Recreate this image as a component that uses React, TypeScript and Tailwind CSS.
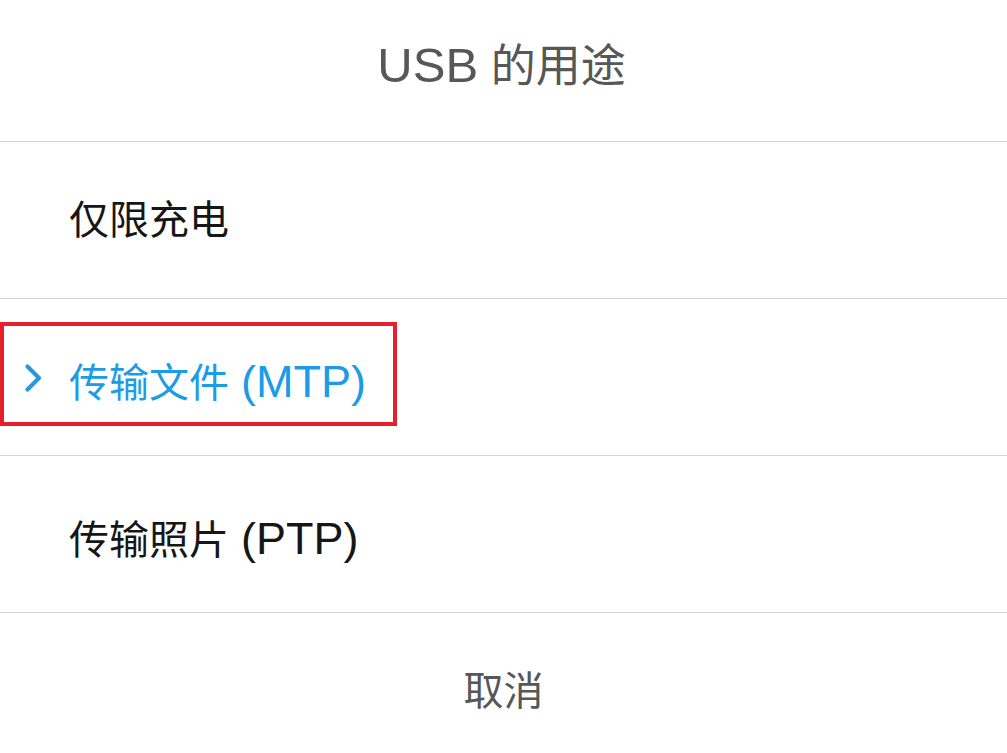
import React from "react";

const font = { fontFamily: '"Liberation Sans", "Noto Sans CJK SC", sans-serif' };

export default function App() {
  return (
    <div className="w-[1007px] h-[753px] overflow-hidden bg-white" style={font}>
      <div className="h-[141px] flex items-center justify-center pb-[10px] pr-[4px]">
        <span className="text-[45px] text-[#575757] leading-none">
          <span className="text-[49px]">USB</span> 的用途
        </span>
      </div>
      <div className="h-[157px] border-t border-[#d4d4d4] flex items-center pl-[69px]">
        <span className="text-[40px] text-[#161616] leading-none">仅限充电</span>
      </div>
      <div className="relative h-[157px] border-t border-[#d4d4d4] flex items-center pl-[69px] pt-[8px]">
        <svg className="absolute left-[23px] top-[64px]" width="20" height="30" viewBox="0 0 20 30">
          <path d="M4.5 3.5 L16 15 L4.5 26.5" fill="none" stroke="#2a97dc" strokeWidth="4.2" strokeLinecap="round" strokeLinejoin="round" />
        </svg>
        <span className="text-[40px] text-[#1c9be6] leading-none">
          传输文件<span className="text-[45px] ml-[12px]">(MTP)</span>
        </span>
        <div className="absolute left-0 top-[23px] w-[397px] h-[104px] border-[4px] border-[#e5202a]" />
      </div>
      <div className="h-[157px] border-t border-[#d4d4d4] flex items-center pl-[69px] pt-[8px]">
        <span className="text-[40px] text-[#161616] leading-none">
          传输照片<span className="text-[45px] ml-[12px]">(PTP)</span>
        </span>
      </div>
      <div className="h-[157px] border-t border-[#d4d4d4] flex items-center justify-center">
        <span className="text-[40px] text-[#575757] leading-none">取消</span>
      </div>
    </div>
  );
}
